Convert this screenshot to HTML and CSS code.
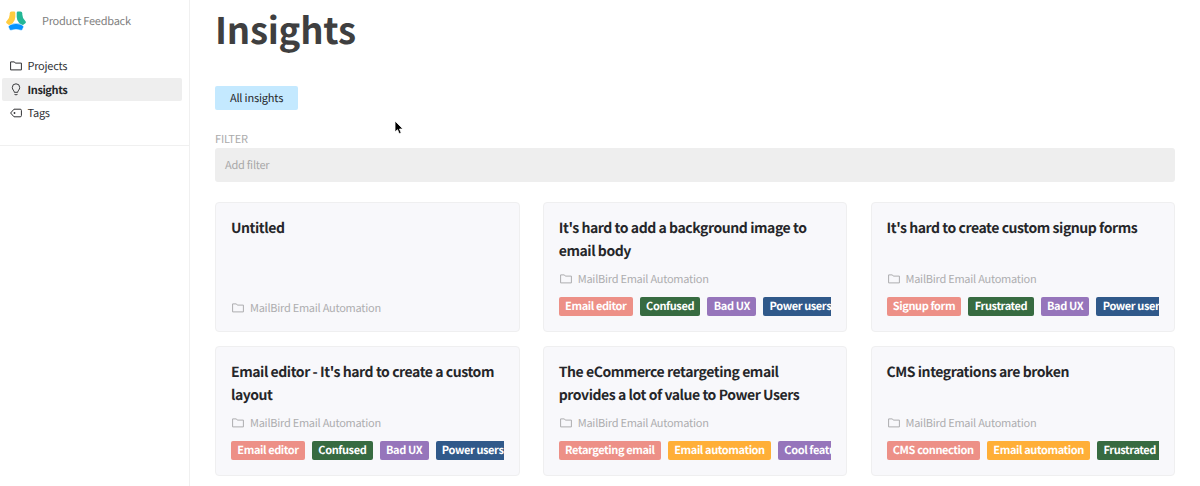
FILE: index.html
```html
<!DOCTYPE html>
<html lang="en">
<head>
<meta charset="utf-8">
<title>Insights</title>
<link rel="stylesheet" href="styles.css">
</head>
<body>
<svg class="defs" width="0" height="0">
  <symbol id="folder" viewBox="0 0 12 10"><path d="M.6.900v8h10.800V2.100H5.300L4.400.900z" fill="none" stroke="currentColor" stroke-width="1" stroke-linejoin="round"/></symbol>
</svg>
<div class="app">
  <aside class="sidebar">
    <div class="brand">
      <svg class="logo" viewBox="0 0 20 20" width="20" height="20">
        <path d="M5.500.6H8Q9.300.6 9.300 2V6Q9.300 9.600 6.500 12.600L5.300 13.900Q4.200 14.700 3 13.900L.6 12.300Q-.4 11.200.7 10 3.600 7.500 3.700 3.400V2.200Q3.800.6 5.500.6z" fill="#ffcc40"/>
        <path d="M14.500.6H12Q10.700.6 10.700 2V6Q10.700 9.600 13.500 12.600L14.700 13.900Q15.800 14.700 17 13.900L19.400 12.300Q20.400 11.200 19.300 10 16.400 7.500 16.300 3.400V2.200Q16.200.6 14.500.6z" fill="#24b796"/>
        <path d="M5 13.400Q10 11.300 15 13.400l1.800 1q1.400.8.600 2.200l-.9 1.800q-.7 1.300-2.200.8-4.300-1.400-8.600 0-1.500.5-2.200-.8L2.600 16.600q-.8-1.400.6-2.200z" fill="#0794ff" stroke="#fff" stroke-width=".6"/>
      </svg>
      <span class="brand-name">Product Feedback</span>
    </div>
    <nav class="nav">
      <a class="nav-item"><svg class="nav-icon" width="12" height="10"><use href="#folder"/></svg><span class="nav-text">Projects</span></a>
      <a class="nav-item active"><svg class="nav-icon" viewBox="0 0 12 13" width="12" height="13"><path d="M4.300 9.300C4.300 7.600 2.300 6.800 2.300 4.500a3.700 3.700 0 0 1 7.400 0C9.700 6.800 7.700 7.600 7.700 9.300zM4.500 11.400q1.500.9 3 0" fill="none" stroke="currentColor" stroke-width=".9"/></svg><span class="nav-text">Insights</span></a>
      <a class="nav-item"><svg class="nav-icon" viewBox="0 0 12 10" width="12" height="10"><path d="M4 1.200h6.200q1.200 0 1.200 1.200v5.200q0 1.200-1.200 1.200H4L.6 5z" fill="none" stroke="currentColor" stroke-linejoin="round"/><circle cx="4.500" cy="5" r=".9" fill="currentColor"/></svg><span class="nav-text">Tags</span></a>
    </nav>
  </aside>
  <main class="main">
    <h1 class="page-title">Insights</h1>
    <a class="tab">All insights</a>
    <div class="filter-label">FILTER</div>
    <div class="filter">Add filter</div>
    <section class="grid">
      <article class="card">
        <h2 class="card-title">Untitled</h2>
        <div class="project"><svg class="folder" width="12" height="10"><use href="#folder"/></svg>MailBird Email Automation</div>
      </article>
      <article class="card">
        <h2 class="card-title">It's hard to add a background image to<br>email body</h2>
        <div class="project"><svg class="folder" width="12" height="10"><use href="#folder"/></svg>MailBird Email Automation</div>
        <div class="tags"><span class="tag coral">Email editor</span><span class="tag green">Confused</span><span class="tag purple">Bad UX</span><span class="tag blue">Power users</span></div>
      </article>
      <article class="card">
        <h2 class="card-title">It's hard to create custom signup forms</h2>
        <div class="project"><svg class="folder" width="12" height="10"><use href="#folder"/></svg>MailBird Email Automation</div>
        <div class="tags"><span class="tag coral">Signup form</span><span class="tag green">Frustrated</span><span class="tag purple">Bad UX</span><span class="tag blue">Power users</span></div>
      </article>
      <article class="card">
        <h2 class="card-title">Email editor - It's hard to create a custom<br>layout</h2>
        <div class="project"><svg class="folder" width="12" height="10"><use href="#folder"/></svg>MailBird Email Automation</div>
        <div class="tags"><span class="tag coral">Email editor</span><span class="tag green">Confused</span><span class="tag purple">Bad UX</span><span class="tag blue">Power users</span></div>
      </article>
      <article class="card">
        <h2 class="card-title">The eCommerce retargeting email<br>provides a lot of value to Power Users</h2>
        <div class="project"><svg class="folder" width="12" height="10"><use href="#folder"/></svg>MailBird Email Automation</div>
        <div class="tags"><span class="tag coral">Retargeting email</span><span class="tag orange">Email automation</span><span class="tag purple">Cool feature</span></div>
      </article>
      <article class="card">
        <h2 class="card-title">CMS integrations are broken</h2>
        <div class="project"><svg class="folder" width="12" height="10"><use href="#folder"/></svg>MailBird Email Automation</div>
        <div class="tags"><span class="tag coral">CMS connection</span><span class="tag orange">Email automation</span><span class="tag green">Frustrated</span></div>
      </article>
    </section>
  </main>
</div>
<svg class="cursor" viewBox="0 0 10 15" width="10" height="15"><path d="M1 1v11l2.500-2.300L5.200 13.700l2-.9L5.500 9H9z" fill="#000" stroke="#fff" stroke-width=".8"/></svg>
</body>
</html>
```
FILE: styles.css
```css
* { box-sizing: border-box; }
body {
  margin: 0;
  background: #fff;
  color: #252629;
  font-family: "Noto Sans CJK SC", "Noto Sans", sans-serif;
  font-size: 11px;
  letter-spacing: -.25px;
  text-rendering: geometricPrecision;
  overflow: hidden;
}
.defs { position: absolute; }
.app { display: flex; height: 486px; }
.sidebar { width: 190px; flex: none; border-right: 1px solid #f0f0f0; }
.brand { display: flex; align-items: center; height: 41px; padding-left: 6px; gap: 16px; color: #808080; }
.logo { flex: none; }
.nav { height: 105px; padding: 13px 7px 0 2px; border-bottom: 1px solid #f0f0f0; }
.nav-item { display: flex; align-items: center; height: 23.500px; padding-left: 8px; gap: 5.500px; color: #303134; border-radius: 2px; }
.nav-text { line-height: 16px; padding-top: 1px; }
.nav-item.active { background: #eee; color: #252629; font-weight: 700; letter-spacing: -.4px; }
.nav-icon { flex: none; }
.main { flex: 1; min-width: 0; padding: 0 25px; }
.page-title { margin: 0; height: 86px; line-height: 58px; font-size: 36.500px; font-weight: 700; color: #3f3f40; }
.tab { display: block; width: 83px; height: 23.500px; line-height: 24px; text-align: center; background: #c4e9ff; border-radius: 2px; letter-spacing: -.18px; }
.filter-label { margin-top: 20.500px; height: 18px; line-height: 18px; color: #ababab; letter-spacing: -.15px; }
.filter { height: 33.500px; line-height: 34px; padding-left: 10px; color: #a8a8a8; background: #eee; border-radius: 3px; }
.grid { display: grid; grid-template-columns: repeat(3, 304.500px); justify-content: space-between; grid-auto-rows: 130px; row-gap: 14px; margin-top: 20.500px; }
.card { display: flex; flex-direction: column; padding: 13.500px 15px 15px; background: #f8f8fb; border: 1px solid #efeff0; border-radius: 4px; min-width: 0; }
.card-title { margin: 0 0 auto; font-size: 14px; line-height: 23.500px; font-weight: 700; letter-spacing: -.44px; white-space: nowrap; }
.project { display: flex; align-items: center; height: 16px; gap: 6px; color: #adadaf; white-space: nowrap; }
.folder { flex: none; margin-left: 1px; }
.tags { display: flex; gap: 7px; margin-top: 10px; overflow: hidden; }
.tag { flex: none; height: 19px; line-height: 19px; padding: 0 6.300px; border-radius: 2px; color: #fff; font-weight: 700; letter-spacing: -.39px; }
.coral { background: #ed9087; }
.green { background: #376b41; }
.purple { background: #9675bb; }
.blue { background: #30598a; }
.orange { background: #ffaf37; }
.cursor { position: absolute; left: 394px; top: 120px; }
```
